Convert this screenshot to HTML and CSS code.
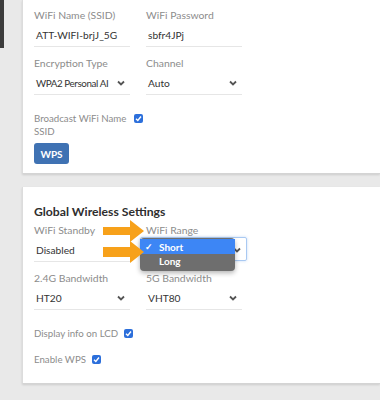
FILE: index.html
```html
<!DOCTYPE html>
<html lang="en">
<head>
    <meta charset="UTF-8">
    <meta name="viewport" content="width=device-width, initial-scale=1.0">
    <title>Wireless Settings</title>
    <link rel="stylesheet" href="styles.css">
</head>
<body>
<div class="page">
    <div class="rail"><div class="rail-bar"></div></div>

    <main class="content">
        <!-- radio settings -->
        <section class="card card-top">
            <div class="grid">
                <div class="field">
                    <div class="label">WiFi Name (SSID)</div>
                    <div class="input"><span class="value">ATT-WIFI-brjJ_5G</span></div>
                </div>
                <div class="field">
                    <div class="label">WiFi Password</div>
                    <div class="input"><span class="value">sbfr4JPj</span></div>
                </div>
                <div class="field">
                    <div class="label">Encryption Type</div>
                    <div class="input select"><span class="value tight">WPA2 Personal AI</span><svg class="chev" width="8" height="6" viewBox="0 0 8 6"><path d="M1 1.5 L4 4.5 L7 1.5" fill="none" stroke="#555" stroke-width="1.8"/></svg></div>
                </div>
                <div class="field">
                    <div class="label">Channel</div>
                    <div class="input select"><span class="value">Auto</span><svg class="chev" width="8" height="6" viewBox="0 0 8 6"><path d="M1 1.5 L4 4.5 L7 1.5" fill="none" stroke="#555" stroke-width="1.8"/></svg></div>
                </div>
            </div>

            <div class="check-row">
                <span class="check-label wrap">Broadcast WiFi Name SSID</span>
                <span class="box"><svg width="9" height="9" viewBox="0 0 9 9"><path d="M2 4.8 L3.8 6.5 L7 2.5" fill="none" stroke="#fff" stroke-width="1.4"/></svg></span>
            </div>

            <button class="btn" type="button">WPS</button>
        </section>

        <!-- global settings -->
        <section class="card card-bottom">
            <h3>Global Wireless Settings</h3>
            <div class="grid">
                <div class="field">
                    <div class="label">WiFi Standby</div>
                    <div class="input select"><span class="value">Disabled</span><svg class="chev" width="8" height="6" viewBox="0 0 8 6"><path d="M1 1.5 L4 4.5 L7 1.5" fill="none" stroke="#555" stroke-width="1.8"/></svg></div>
                </div>
                <div class="field">
                    <div class="label">WiFi Range</div>
                    <div class="input select focused"><svg class="chev" width="8" height="6" viewBox="0 0 8 6"><path d="M1 1.5 L4 4.5 L7 1.5" fill="none" stroke="#555" stroke-width="1.8"/></svg>
                        <ul class="menu">
                            <li class="active"><span class="tick">✓</span>Short</li>
                            <li><span class="tick"></span>Long</li>
                        </ul>
                    </div>
                </div>
                <div class="field">
                    <div class="label">2.4G Bandwidth</div>
                    <div class="input select"><span class="value">HT20</span><svg class="chev" width="8" height="6" viewBox="0 0 8 6"><path d="M1 1.5 L4 4.5 L7 1.5" fill="none" stroke="#555" stroke-width="1.8"/></svg></div>
                </div>
                <div class="field">
                    <div class="label">5G Bandwidth</div>
                    <div class="input select"><span class="value">VHT80</span><svg class="chev" width="8" height="6" viewBox="0 0 8 6"><path d="M1 1.5 L4 4.5 L7 1.5" fill="none" stroke="#555" stroke-width="1.8"/></svg></div>
                </div>
            </div>

            <div class="check-row spaced">
                <span class="check-label">Display info on LCD</span>
                <span class="box"><svg width="9" height="9" viewBox="0 0 9 9"><path d="M2 4.8 L3.8 6.5 L7 2.5" fill="none" stroke="#fff" stroke-width="1.4"/></svg></span>
            </div>
            <div class="check-row spaced">
                <span class="check-label">Enable WPS</span>
                <span class="box"><svg width="9" height="9" viewBox="0 0 9 9"><path d="M2 4.8 L3.8 6.5 L7 2.5" fill="none" stroke="#fff" stroke-width="1.4"/></svg></span>
            </div>

            <!-- callout arrows -->
            <svg class="arrow arrow-1" width="42" height="22" viewBox="0 0 42 22"><path d="M0 7 H27 V0 L41 11 L27 22 V15 H0 Z" fill="#f7a11a"/></svg>
            <svg class="arrow arrow-2" width="42" height="22" viewBox="0 0 42 22"><path d="M0 6 H27 V0 L41 11 L27 22 V16 H0 Z" fill="#f7a11a"/></svg>
        </section>
    </main>
</div>
</body>
</html>
```

FILE: styles.css
```css
body {
    margin: 0;
    background-color: #e9e9e9;
    font-family: Lato, "Open Sans", sans-serif;
    color: #333;
}
.page {
    display: flex;
    min-height: 400px;
}
.rail {
    width: 22px;
    flex-shrink: 0;
}
.rail-bar {
    width: 4px;
    height: 48px;
    background-color: #3c3c3c;
}
.content {
    flex: 1;
    display: flex;
    flex-direction: column;
    gap: 13px;
}
.card {
    background-color: #fff;
    border-left: 1px solid #dcdcdc;
    border-bottom: 1px solid #d4d4d4;
    box-shadow: 0 1px 2px rgba(0, 0, 0, 0.12);
    padding: 8px 0 11px 11px;
    position: relative;
}
.card-top {
    height: 154px;
}
.card-bottom {
    padding-top: 17px;
    height: 168px;
}
h3 {
    margin: 0 0 3px;
    font-size: 12.2px;
    font-weight: 700;
    line-height: 16px;
    color: #2e2e2e;
}
.grid {
    display: grid;
    grid-template-columns: 96px 96px;
    column-gap: 16px;
    row-gap: 9px;
}
.label {
    font-size: 10.4px;
    line-height: 14px;
    color: #8c8c8c;
}
.input {
    position: relative;
    display: flex;
    align-items: center;
    justify-content: space-between;
    height: 23px;
    padding: 1px 5px 0 2px;
    border-bottom: 1px solid #e6e6e6;
    font-size: 10.2px;
    color: #333;
}
.value {
    white-space: nowrap;
    flex: 1;
    min-width: 0;
}
.value.tight {
    font-size: 9.8px;
    letter-spacing: -0.4px;
}
.chev {
    flex-shrink: 0;
}
.input.focused {
    margin-left: -6px;
    padding-left: 8px;
    width: 92px;
    height: 21px;
    justify-content: flex-end;
    border: 1px solid #a9c9f2;
    border-radius: 2px;
    box-shadow: 0 0 3px rgba(90, 150, 230, 0.35);
}
.menu {
    position: absolute;
    left: -1px;
    top: 0;
    width: 95px;
    margin: 0;
    padding: 1px 0 3px;
    list-style: none;
    background-color: #6e6e6e;
    border-radius: 4px;
    box-shadow: 0 2px 5px rgba(0, 0, 0, 0.3);
    z-index: 2;
}
.menu li {
    display: flex;
    align-items: center;
    height: 14px;
    font-size: 10px;
    font-weight: 700;
    color: #fff;
}
.menu li.active {
    background-color: #3d86f5;
    height: 15px;
}
.tick {
    width: 14px;
    padding-left: 5px;
    font-size: 9px;
}
.check-row {
    display: flex;
    align-items: flex-start;
    margin-top: 17px;
    font-size: 9.7px;
    line-height: 13px;
    color: #8c8c8c;
}
.check-label.wrap {
    width: 96px;
}
.check-row.spaced {
    margin-top: 17px;
    align-items: center;
}
.check-row.spaced + .check-row.spaced {
    margin-top: 13px;
}
.box {
    width: 9px;
    height: 9px;
    margin-left: 6px;
    margin-top: 2px;
    background-color: #2c6fdb;
    border-radius: 2px;
    display: flex;
}
.check-label.wrap + .box {
    margin-left: 4px;
}
.check-row.spaced .box {
    margin-top: 0;
}
.btn {
    margin-top: 5px;
    width: 35px;
    height: 21px;
    padding: 0;
    border: none;
    border-radius: 3px;
    background-color: #3f72b3;
    color: #fff;
    font-family: inherit;
    font-size: 10px;
    font-weight: 700;
}
.arrow {
    position: absolute;
    left: 80px;
    z-index: 3;
}
.arrow-1 {
    top: 33px;
}
.arrow-2 {
    top: 54px;
}
```
